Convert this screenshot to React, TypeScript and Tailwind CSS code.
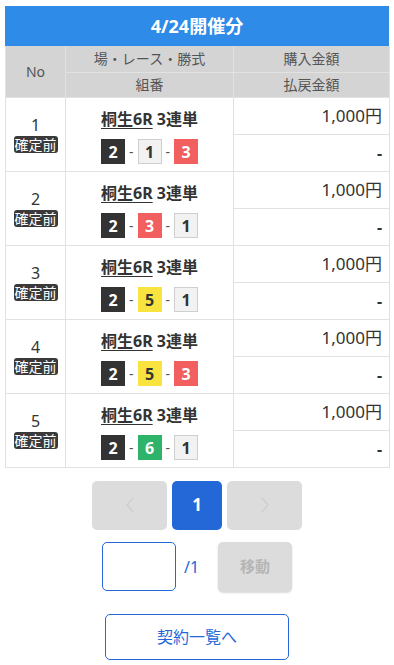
import React from "react";

type Box = { n: string; cls: string };
const B = {
  k: "bg-[#333333] text-white border-[#333333]",
  w: "bg-[#f2f2f2] text-[#333] border-[#cfcfcf]",
  r: "bg-[#f25f5f] text-white border-[#f25f5f]",
  y: "bg-[#f9e43f] text-[#333] border-[#f9e43f]",
  g: "bg-[#2db36a] text-white border-[#2db36a]",
};

const rows: { no: string; boxes: Box[] }[] = [
  { no: "1", boxes: [{ n: "2", cls: B.k }, { n: "1", cls: B.w }, { n: "3", cls: B.r }] },
  { no: "2", boxes: [{ n: "2", cls: B.k }, { n: "3", cls: B.r }, { n: "1", cls: B.w }] },
  { no: "3", boxes: [{ n: "2", cls: B.k }, { n: "5", cls: B.y }, { n: "1", cls: B.w }] },
  { no: "4", boxes: [{ n: "2", cls: B.k }, { n: "5", cls: B.y }, { n: "3", cls: B.r }] },
  { no: "5", boxes: [{ n: "2", cls: B.k }, { n: "6", cls: B.g }, { n: "1", cls: B.w }] },
];

export default function App() {
  return (
    <div
      className="w-[394px] min-h-[665px] bg-white text-[#333]"
      style={{ fontFamily: '"Noto Sans", "Noto Sans CJK JP", sans-serif' }}
    >
      <div className="pt-[6px] px-[5px]">
        <div className="h-[40px] bg-[#2f8be8] text-white font-bold text-[18px] flex items-center justify-center">
          4/24開催分
        </div>
        <table className="w-[384px] border-collapse table-fixed">
          <colgroup>
            <col className="w-[60px]" />
            <col className="w-[168px]" />
            <col className="w-[156px]" />
          </colgroup>
          <tbody>
            <tr className="h-[26px] bg-[#d4d4d4] text-[#555] text-[14px]">
              <td rowSpan={2} className="border border-[#e2e2e2] border-t-0 text-center">No</td>
              <td className="border border-[#e2e2e2] border-t-0 text-center leading-none">場・レース・勝式</td>
              <td className="border border-[#e2e2e2] border-t-0 text-center leading-none">購入金額</td>
            </tr>
            <tr className="h-[25px] bg-[#d4d4d4] text-[#555] text-[14px]">
              <td className="border border-[#e2e2e2] text-center leading-none">組番</td>
              <td className="border border-[#e2e2e2] text-center leading-none">払戻金額</td>
            </tr>
            {rows.map((r) => (
              <React.Fragment key={r.no}>
                <tr className="h-[37px]">
                  <td rowSpan={2} className="border border-[#e2e2e2] text-center align-middle">
                    <div className="flex flex-col items-center">
                      <span className="text-[16px] leading-[20px]">{r.no}</span>
                      <span className="mt-[1px] bg-[#3a3a3a] text-white text-[14px] leading-[17px] px-[1px] rounded-[3px]">
                        確定前
                      </span>
                    </div>
                  </td>
                  <td className="border border-[#e2e2e2] border-b-0 text-center align-bottom pb-[3px]">
                    <span className="font-bold text-[16px] leading-none">
                      <span className="underline underline-offset-[3px] decoration-1">桐生6R</span> 3連単
                    </span>
                  </td>
                  <td className="border border-[#e2e2e2] text-right pr-[7px] text-[17px] align-middle">
                    1,000円
                  </td>
                </tr>
                <tr className="h-[37px]">
                  <td className="border border-[#e2e2e2] border-t-0 align-top pt-[5px]">
                    <div className="flex items-center justify-center">
                      {r.boxes.map((b, i) => (
                        <React.Fragment key={i}>
                          {i > 0 && <span className="mx-[4px] text-[14px] leading-none text-[#555]">-</span>}
                          <span
                            className={`w-[24px] h-[25px] border flex items-center justify-center font-bold text-[16px] leading-none ${b.cls}`}
                          >
                            {b.n}
                          </span>
                        </React.Fragment>
                      ))}
                    </div>
                  </td>
                  <td className="border border-[#e2e2e2] text-right pr-[7px] text-[16px] font-bold align-middle">
                    -
                  </td>
                </tr>
              </React.Fragment>
            ))}
          </tbody>
        </table>
      </div>

      <div className="mt-[13px] flex justify-center gap-[5px]">
        <div className="w-[75px] h-[49px] rounded-[5px] bg-[#dcdcdc] flex items-center justify-center">
          <svg width="10" height="16" viewBox="0 0 10 16" fill="none">
            <path d="M8 1 L2 8 L8 15" stroke="#cfcfcf" strokeWidth="1.5" />
          </svg>
        </div>
        <div className="w-[50px] h-[49px] rounded-[5px] bg-[#2468d8] text-white font-bold text-[17px] flex items-center justify-center">
          1
        </div>
        <div className="w-[75px] h-[49px] rounded-[5px] bg-[#dcdcdc] flex items-center justify-center">
          <svg width="10" height="16" viewBox="0 0 10 16" fill="none">
            <path d="M2 1 L8 8 L2 15" stroke="#cfcfcf" strokeWidth="1.5" />
          </svg>
        </div>
      </div>

      <div className="mt-[12px] flex justify-center items-center">
        <input className="w-[74px] h-[49px] border border-[#2468d8] rounded-[5px] outline-none" />
        <span className="ml-[8px] w-[34px] text-[16px] text-[#2468d8]">/1</span>
        <div className="w-[74px] h-[50px] rounded-[5px] bg-[#dcdcdc] text-[#b5b5b5] font-bold text-[15px] flex items-center justify-center shadow-[0_1px_2px_rgba(0,0,0,0.15)]">
          移動
        </div>
      </div>

      <div className="mt-[22px] flex justify-center">
        <div className="w-[184px] h-[46px] border border-[#2468d8] rounded-[5px] text-[#2468d8] text-[16px] flex items-center justify-center">
          契約一覧へ
        </div>
      </div>
    </div>
  );
}
